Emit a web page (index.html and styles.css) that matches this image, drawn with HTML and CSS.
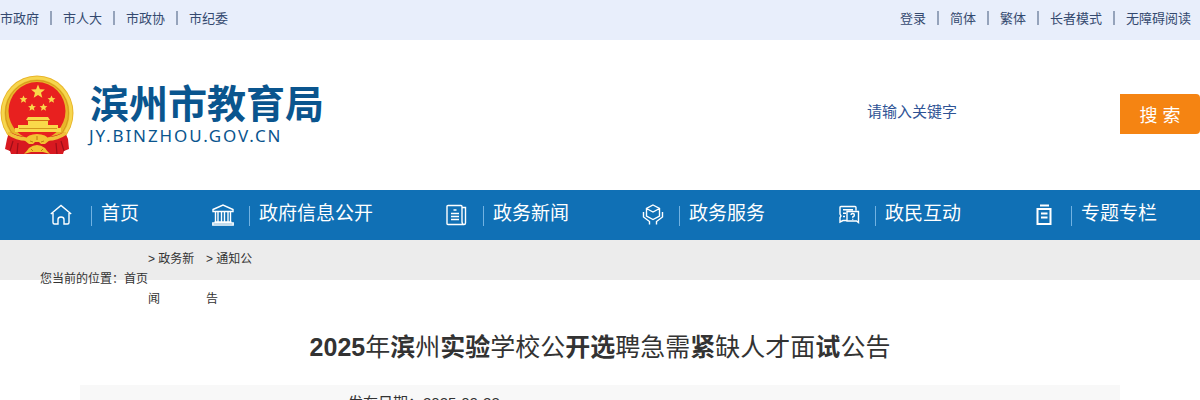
FILE: index.html
```html
<!DOCTYPE html>
<html lang="zh-CN">
<head>
    <meta charset="UTF-8">
    <meta name="viewport" content="width=device-width, initial-scale=1.0">
    <title>2025年滨州实验学校公开选聘急需紧缺人才面试公告</title>
    <link rel="stylesheet" href="styles.css">
</head>
<body>
    <div class="topbar">
        <ul class="top-links">
            <li>市政府</li>
            <li>市人大</li>
            <li>市政协</li>
            <li>市纪委</li>
        </ul>
        <ul class="top-links">
            <li>登录</li>
            <li>简体</li>
            <li>繁体</li>
            <li>长者模式</li>
            <li>无障碍阅读</li>
        </ul>
    </div>

    <header class="header">
        <div class="logo">
            <svg class="emblem" viewBox="0 0 74 80">
                <!-- 麦穗圆环 -->
                <ellipse cx="37" cy="38" rx="36.5" ry="37.5" fill="#e9b52a"/>
                <ellipse cx="37" cy="38" rx="34" ry="35" fill="none" stroke="#f6d64e" stroke-width="3"/>
                <ellipse cx="37" cy="38" rx="31.500" ry="32.500" fill="none" stroke="#d39c1c" stroke-width="1"/>
                <ellipse cx="37" cy="36" rx="28.500" ry="29" fill="#e8201f"/>
                <!-- 五星 -->
                <g fill="#f9d84a">
                    <path d="M38 9.500l1.900 4.700 5 .4-3.900 3.200 1.300 5-4.300-2.700-4.300 2.700 1.300-5-3.900-3.200 5-.4z"/>
                    <path d="M23.500 20.500l1.200 2.500 2.700.2-2.100 1.800.7 2.700-2.500-1.500-2.500 1.500.7-2.700-2.100-1.800 2.700-.2z"/>
                    <path d="M51.500 20.500l1.200 2.500 2.700.2-2.100 1.800.7 2.700-2.500-1.500-2.500 1.500.7-2.700-2.100-1.800 2.700-.2z"/>
                    <path d="M32 28.500l1.200 2.500 2.700.2-2.100 1.800.7 2.700-2.500-1.500-2.500 1.500.7-2.700-2.100-1.800 2.700-.2z"/>
                    <path d="M43.500 28.500l1.200 2.500 2.700.2-2.100 1.800.7 2.700-2.500-1.500-2.500 1.500.7-2.700-2.100-1.800 2.700-.2z"/>
                    <!-- 天安门 -->
                    <path d="M28 42h20l2 3H26zM28 46h20v4h10v3h3v4H15v-4h3v-3h10z"/>
                </g>
                <path d="M27 45.500h22M19 53.500h38" stroke="#c98512" stroke-width=".8"/>
                <!-- 红绶带 -->
                <path d="M9 57q14 6 28 6t28-6l3 7 1 10-5 2-1 3H11l-1-3-5-2 2-10z" fill="#d81920"/>
                <path d="M8 58q9 6 18 6M66 58q-9 6-18 6" stroke="#f0c139" stroke-width="3.500" fill="none"/>
                <path d="M13 66l-3 10M18 68l-1 11M61 66l3 10M56 68l1 11" stroke="#9e0e19" stroke-width="1.200"/>
                <!-- 齿轮 -->
                <path d="M24 65q4-6 13-6t13 6l-5 4h-4l-2-2h-4l-2 2h-4z" fill="#f2c332"/>
                <path d="M24 79q3-3 5-6 4-3 8-3t8 3q2 3 5 6l-7-2H31z" fill="#f2c332"/>
                <path d="M30 66l3 1M44 66l-3 1M37 61v4M31 74l2 2M43 74l-2 2" stroke="#c17a10" stroke-width="1"/>
            </svg>
            <div class="site-name">
                <strong>滨州市教育局</strong>
                <span>JY.BINZHOU.GOV.CN</span>
            </div>
        </div>
        <form class="search">
            <input type="text" placeholder="请输入关键字">
            <button type="button">搜 索</button>
        </form>
    </header>

    <nav class="nav">
        <a class="nav-item">
            <svg viewBox="0 0 22 22"><path d="M.8 10L11 1.500 21.200 10M3 9v9.500Q3 20 4.500 20H8v-4.500Q8 13 11 13t3 2.500V20h3.500Q19 20 19 18.500V9"/></svg>
            <span>首页</span>
        </a>
        <a class="nav-item nav-wide">
            <svg viewBox="0 0 22 22"><path d="M1 5.500L11 1l10 4.500v2H1zM3.500 8v9.500M6 8v9.500M9.500 8v9.500M12.500 8v9.500M16 8v9.500M18.500 8v9.500M2.500 18h17M.8 21h20.400v-2H.8z"/></svg>
            <span>政府信息公开</span>
        </a>
        <a class="nav-item">
            <svg viewBox="0 0 22 22"><path d="M2 1.500h13q1 0 1 1v15q0 3 2 3H2q-1 0-1-1v-17q0-1 1-1zM16.500 3.500h3V19q0 1.500-1.500 1.500M7.500 6h3M5 9.500h8M5 12.500h8M5 15.500h8"/></svg>
            <span>政务新闻</span>
        </a>
        <a class="nav-item">
            <svg viewBox="0 0 22 22"><path d="M11 1l6.500 3.500v7.500L11 15.500 4.500 12V4.500zM4.500 4.500L11 8l6.500-3.500M1.500 8v5l6 4.500v3M20.500 8v5l-6 4.500v3"/></svg>
            <span>政务服务</span>
        </a>
        <a class="nav-item">
            <svg viewBox="0 0 22 22"><path d="M8.500 16.500H5L2 18v-4.500l1-1.500-1-2V3.500q0-1 1-1h14q1 0 1 1v3M5 5.800h10M5 9.200h3M5 12.500h2M9 7.500h11.500v11l-2-1.500H9zM13 11q0-1.500 1.700-1.500t1.700 1.500-1.700 2v.8M14.700 14.700v1"/></svg>
            <span>政民互动</span>
        </a>
        <a class="nav-item">
            <svg class="bold" viewBox="0 0 22 22"><path d="M6 1.500h9M3.500 5h13v15h-13zM7 9.500h6.500M7 13.500h6.500"/></svg>
            <span>专题专栏</span>
        </a>
    </nav>

    <div class="crumbs">
        <span>您当前的位置：首页</span>
        <span class="crumb">&gt; 政务新<br>闻</span>
        <span class="crumb">&gt; 通知公<br>告</span>
    </div>

    <main class="article">
        <h1><b>2025</b>年<b>滨</b>州<b>实验</b>学校公<b>开选</b>聘急需<b>紧</b>缺人才面<b>试</b>公告</h1>
        <div class="meta">发布日期：2025-09-23</div>
    </main>
</body>
</html>
```
FILE: styles.css
```css
body {
    margin: 0;
    height: 400px;
    overflow: hidden;
    font-family: "Liberation Sans", "Noto Sans CJK SC", sans-serif;
    font-size: 12px;
    color: #333;
    background-color: #fff;
}

.topbar {
    display: flex;
    justify-content: space-between;
    height: 40px;
    padding-right: 9px;
    background-color: #e8eefb;
}

.top-links {
    display: flex;
    margin: 0;
    padding: 0;
    list-style: none;
    font-size: 13px;
    line-height: 37px;
    color: #34496f;
}

.top-links li {
    display: flex;
}

.top-links li + li::before {
    content: "";
    width: 2px;
    height: 14px;
    margin: 11px 11px 0;
    background-color: #95a3bb;
}

.header {
    display: flex;
    justify-content: space-between;
    height: 150px;
}

.logo {
    display: flex;
    padding-top: 35px;
}

.emblem {
    width: 74px;
    height: 80px;
}

.site-name {
    margin-left: 15px;
    color: #0a558e;
}

.site-name strong {
    display: block;
    padding-left: 1px;
    font-size: 39px;
    line-height: 59px;
    height: 51px;
}

.site-name span {
    display: block;
    font-family: "Noto Sans", sans-serif;
    font-size: 17px;
    line-height: 20px;
    letter-spacing: 1.9px;
}

.search {
    display: flex;
    height: 40px;
    padding-top: 54px;
}

.search input {
    width: 253px;
    height: 35px;
    padding: 0;
    border: 0;
    background: none;
    font-family: inherit;
    font-size: 15px;
}

.search input::placeholder {
    color: #2e5395;
}

.search button {
    width: 80px;
    height: 40px;
    padding: 0;
    border: 0;
    border-radius: 0 4px 4px 0;
    background-color: #f58412;
    color: #fff;
    font-family: inherit;
    font-size: 18px;
}

.nav {
    display: grid;
    grid-template-columns: 162px 230px 196px 196px 196px 170px;
    height: 50px;
    padding-left: 50px;
    background-color: #1070b5;
    color: #fff;
}

.nav-item {
    display: flex;
    align-items: flex-start;
}

.nav-item:nth-child(n+3) {
    margin-left: 4px;
}

.nav-item svg {
    width: 22px;
    height: 22px;
    margin-top: 14px;
    fill: none;
    stroke: #fff;
    stroke-width: 1.4;
}

.nav-item svg.bold {
    stroke-width: 2;
}

.nav-item span {
    font-size: 19px;
    line-height: 47px;
    white-space: nowrap;
}

.nav-item span::before {
    content: "";
    display: inline-block;
    width: 1px;
    height: 20px;
    margin: 0 9px 0 19px;
    vertical-align: -6px;
    background-color: #71b2e2;
}

.nav-item + .nav-item span::before {
    margin-left: 15px;
}

.crumbs {
    display: flex;
    align-items: center;
    height: 2px;
    padding: 38px 0 0 40px;
    line-height: 40px;
    background-color: #ececec;
}

.crumb {
    width: 58px;
}

.article {
    width: 1040px;
    margin: 0 auto;
}

.article h1 {
    margin: 0;
    height: 105px;
    font-size: 25px;
    font-weight: normal;
    line-height: 135px;
    text-align: center;
}

.meta {
    height: 15px;
    background-color: #f8f8f8;
    padding-left: 268px;
    font-size: 15px;
    line-height: 36px;
}
```
